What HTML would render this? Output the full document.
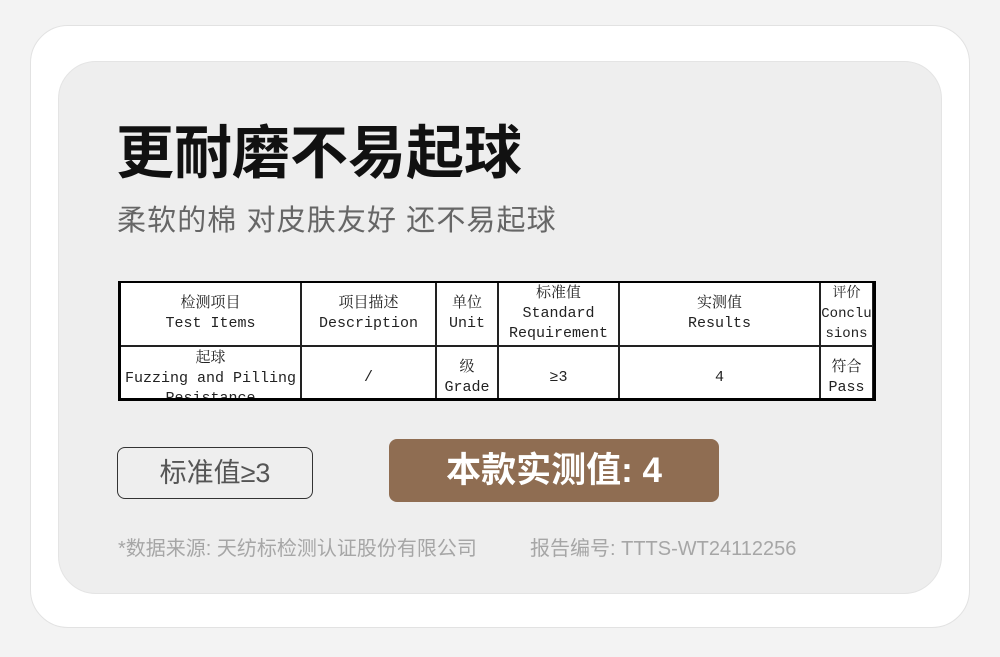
<!DOCTYPE html>
<html><head><meta charset="utf-8"><style>
*{margin:0;padding:0;box-sizing:border-box}
body{width:1000px;height:657px;background:#f3f3f3;position:relative;overflow:hidden;font-family:"Liberation Sans","Noto Sans CJK SC",sans-serif}
.outer{position:absolute;left:30px;top:25px;width:940px;height:603px;background:#fff;border:1px solid #e2e2e2;border-radius:38px}
.inner{position:absolute;left:58px;top:61px;width:884px;height:533px;background:#eeeeee;border:1px solid #e4e4e4;border-radius:38px}
.t1{position:absolute;left:116px;top:118px;font-size:58px;font-weight:bold;color:#111;letter-spacing:0px;line-height:72px}
.t2{position:absolute;left:117px;top:202px;font-size:29px;color:#666;line-height:38px;letter-spacing:1.1px}
.tw{position:absolute;left:118px;top:281px;width:758px;height:120px;overflow:hidden;border:3px solid #000;border-top-width:2px;background:#fff}
table{width:755px;border-collapse:collapse;background:#fff;font-family:"Liberation Mono","Noto Serif CJK SC",monospace;font-size:15px;color:#222;text-align:center;line-height:20px;table-layout:fixed;margin:-2px 0 0 -2px}
td{border:2px solid #222;padding:0;overflow:hidden;white-space:nowrap}
.b1{position:absolute;left:117px;top:447px;width:196px;height:52px;border:1px solid #333;border-radius:8px;font-size:27px;color:#555;text-align:center;line-height:50px}
.b2{position:absolute;left:389px;top:439px;width:330px;height:63px;background:#8f6d52;border-radius:8px;font-size:35px;color:#fff;font-weight:bold;text-align:center;line-height:63px}
.f{position:absolute;top:536px;font-size:20px;color:#a6a6a6;line-height:26px}
</style></head><body>
<div class="outer"></div>
<div class="inner"></div>
<div class="t1">更耐磨不易起球</div>
<div class="t2">柔软的棉 对皮肤友好 还不易起球</div>
<div class="tw">
<table>
<tr style="height:64px"><td style="width:181px">检测项目<br>Test Items</td><td style="width:135px">项目描述<br>Description</td><td style="width:62px">单位<br>Unit</td><td style="width:121px">标准值<br>Standard<br>Requirement</td><td style="width:201px">实测值<br>Results</td><td style="font-size:14px">评价<br>Conclu<br>sions</td></tr>
<tr style="height:60px"><td style="vertical-align:top;padding-top:2px">起球<br>Fuzzing and Pilling<br>Resistance</td><td>/</td><td>级<br>Grade</td><td>≥3</td><td>4</td><td>符合<br>Pass</td></tr>
</table>
</div>
<div class="b1">标准值≥3</div>
<div class="b2">本款实测值: 4</div>
<div class="f" style="left:118px">*数据来源: 天纺标检测认证股份有限公司</div>
<div class="f" style="left:530px">报告编号: TTTS-WT24112256</div>
</body></html>
